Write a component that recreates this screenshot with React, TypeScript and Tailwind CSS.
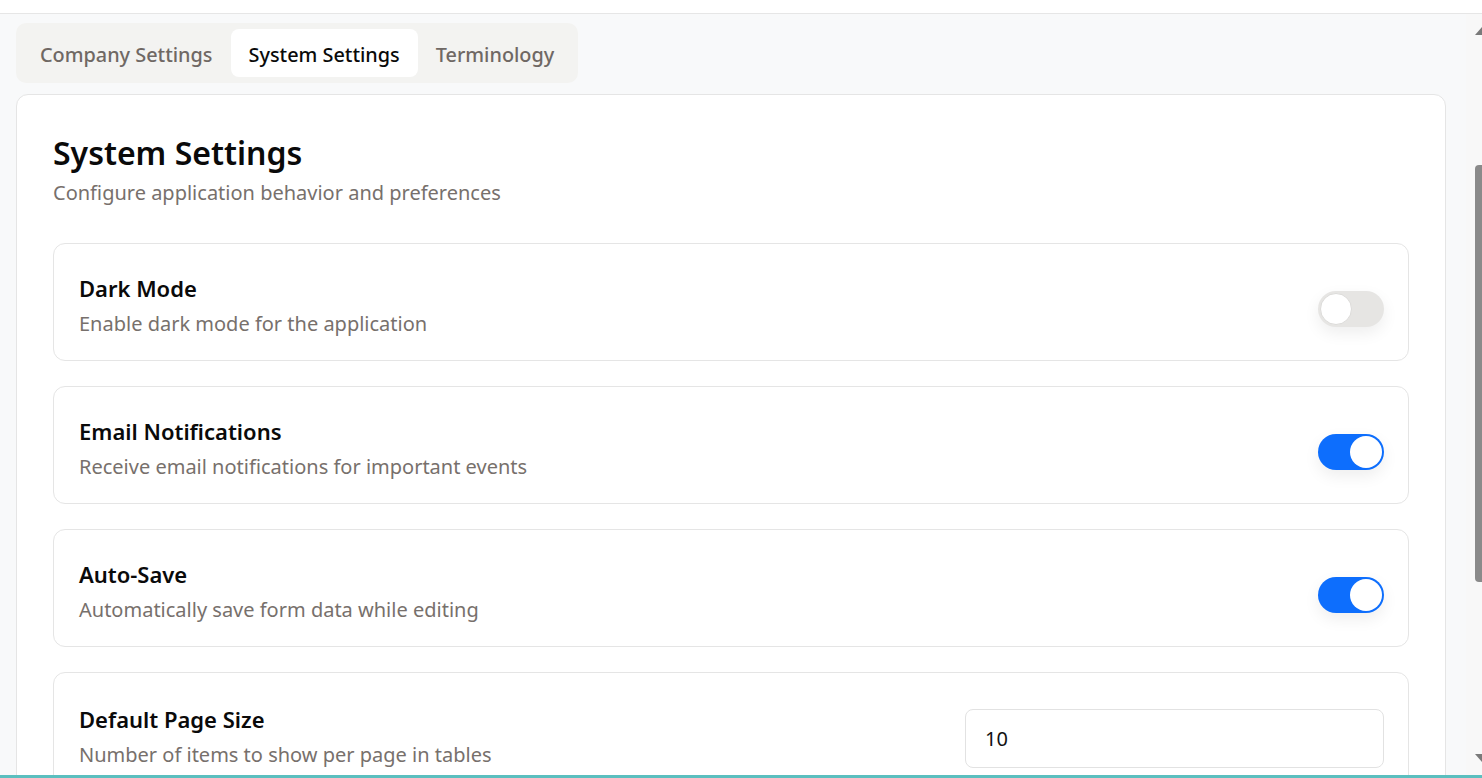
import { useState } from "react";

type Setting = {
  key: string;
  title: string;
  description: string;
};

const toggles: Setting[] = [
  { key: "darkMode", title: "Dark Mode", description: "Enable dark mode for the application" },
  { key: "email", title: "Email Notifications", description: "Receive email notifications for important events" },
  { key: "autoSave", title: "Auto-Save", description: "Automatically save form data while editing" },
];

const tabs = ["Company Settings", "System Settings", "Terminology"];

function Toggle({ on, onChange }: { on: boolean; onChange: () => void }) {
  return (
    <button
      type="button"
      onClick={onChange}
      className={`relative w-[66px] h-[36px] rounded-full p-[2px] flex shadow-[0_6px_16px_rgba(0,0,0,0.07)] transition ${
        on ? "bg-[#0d6efd] justify-end" : "bg-[#e6e5e3] justify-start"
      }`}
    >
      <span
        className={`w-[32px] h-[32px] rounded-full bg-white ${on ? "" : "border border-[#dcdbd9]"}`}
      />
    </button>
  );
}

function Scrollbar() {
  return (
    <div className="w-[16px] shrink-0 overflow-hidden flex flex-col bg-[#f8f8f8]">
      <svg width="14" height="8" viewBox="0 0 14 8" className="ml-[9px] mt-[13px] shrink-0">
        <polygon points="0,8 7,0 14,8" fill="#7a7a7a" />
      </svg>
      <div className="ml-[9px] mt-[130px] w-[12px] h-[417px] rounded-[4px] bg-[#8a8a8a] shrink-0" />
      <div className="flex-1" />
      <svg width="14" height="8" viewBox="0 0 14 8" className="ml-[9px] mb-[13px] shrink-0">
        <polygon points="0,0 14,0 7,8" fill="#7a7a7a" />
      </svg>
    </div>
  );
}

export default function App() {
  const [active, setActive] = useState("System Settings");
  const [values, setValues] = useState<Record<string, boolean>>({
    darkMode: false,
    email: true,
    autoSave: true,
  });
  const [pageSize, setPageSize] = useState("10");

  return (
    <div className="h-screen flex flex-col overflow-hidden bg-[#f8f9fa] font-['Noto_Sans',sans-serif] text-[#111]">
      <div className="h-[14px] shrink-0 bg-white border-b border-[#e6e6e6]" />
      <div className="flex flex-1 min-h-0">
        <main className="flex-1 min-w-0 pl-4 pr-5 pt-[9px] overflow-hidden">
          <div className="inline-flex p-[6px] bg-[#f3f3f1] rounded-[10px]">
            {tabs.map((t) => (
              <button
                key={t}
                type="button"
                onClick={() => setActive(t)}
                className={`h-[48px] px-[18px] pt-[4px] rounded-[8px] text-[19.85px] font-medium ${
                  active === t ? "bg-white text-[#0a0a0a]" : "text-[#6f6864]"
                }`}
              >
                {t}
              </button>
            ))}
          </div>

          <div className="mt-[11px] bg-white border border-[#e5e5e5] rounded-[12px] px-[36px] pt-[36px] pb-10">
            <h1 className="text-[32px] leading-[44px] font-semibold text-[#0a0a0a]">System Settings</h1>
            <p className="mt-[4px] text-[20px] leading-[28px] text-[#77706c]">
              Configure application behavior and preferences
            </p>

            <div className="mt-[36px] flex flex-col gap-[25px]">
              {toggles.map((s) => (
                <div
                  key={s.key}
                  className="h-[118px] border border-[#e5e5e5] rounded-[12px] pl-[25px] pr-[24px] flex items-start justify-between"
                >
                  <div className="pt-[28px]">
                    <div className="text-[22px] leading-[32px] font-semibold text-[#0a0a0a]">{s.title}</div>
                    <div className="mt-[6px] text-[20px] leading-[28px] text-[#77706c]">{s.description}</div>
                  </div>
                  <div className="pt-[47px]">
                    <Toggle
                      on={values[s.key]}
                      onChange={() => setValues((prev) => ({ ...prev, [s.key]: !prev[s.key] }))}
                    />
                  </div>
                </div>
              ))}

              <div className="h-[118px] border border-[#e5e5e5] rounded-[12px] pl-[25px] pr-[24px] flex items-start justify-between">
                <div className="pt-[30px]">
                  <div className="text-[22px] leading-[32px] font-semibold text-[#0a0a0a]">Default Page Size</div>
                  <div className="mt-[6px] text-[20px] leading-[28px] text-[#77706c]">
                    Number of items to show per page in tables
                  </div>
                </div>
                <div className="pt-[36px]">
                  <input
                    type="text"
                    value={pageSize}
                    onChange={(e) => setPageSize(e.target.value)}
                    className="w-[419px] h-[59px] px-[19px] rounded-[8px] border border-[#e2e2e2] text-[20px] text-[#111] focus:outline-none"
                  />
                </div>
              </div>
            </div>
          </div>
        </main>
        <Scrollbar />
      </div>
      <div className="h-[3px] shrink-0 bg-[#5bbfbf]" />
    </div>
  );
}
